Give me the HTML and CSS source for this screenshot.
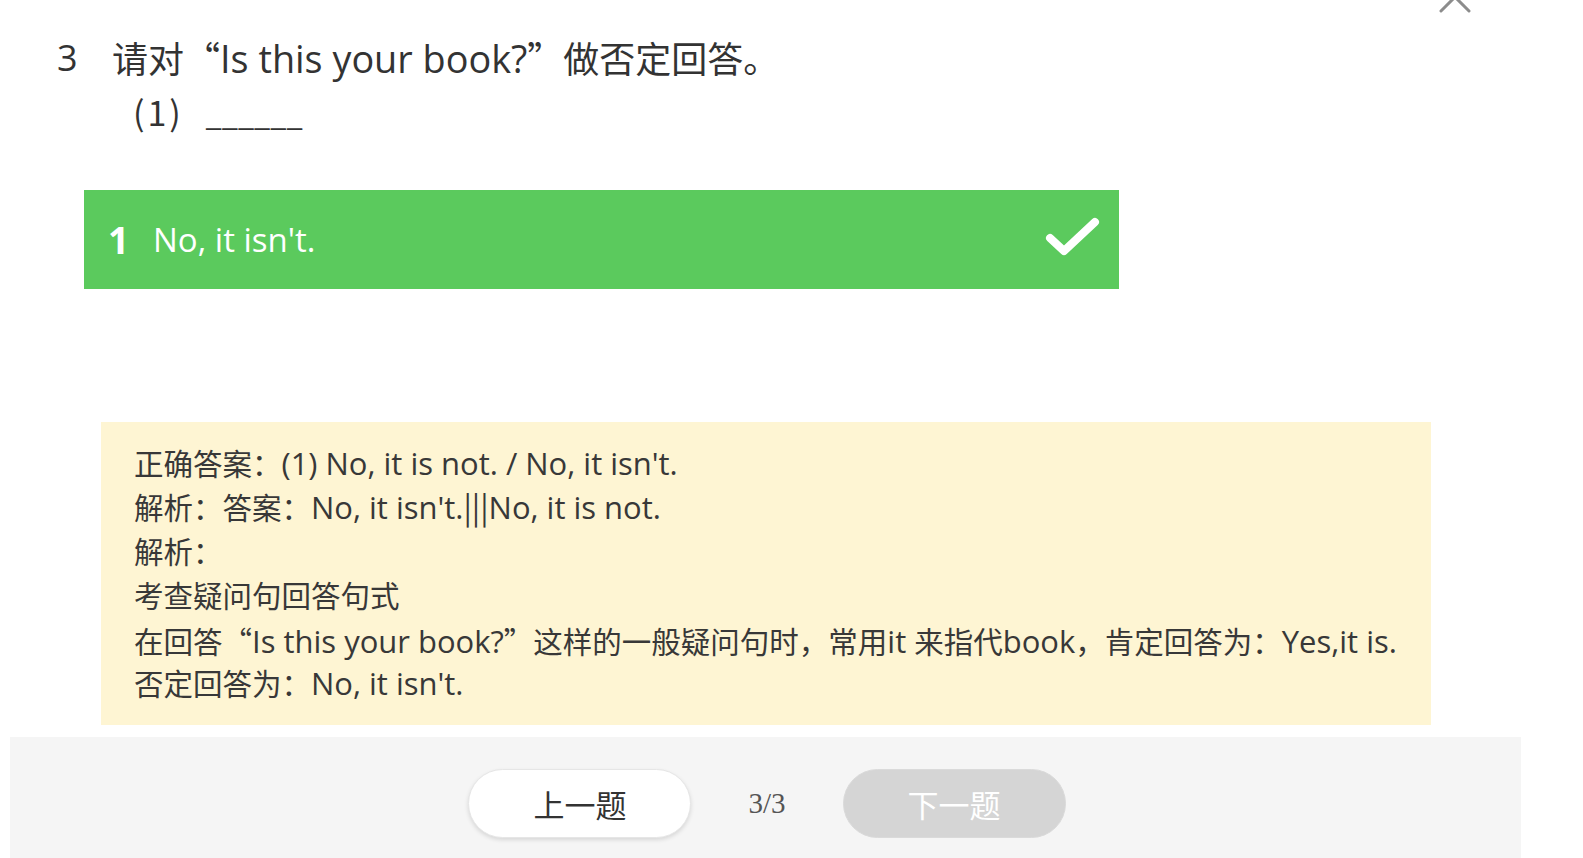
FILE: index.html
```html
<!DOCTYPE html>
<html lang="zh-CN">
<head>
<meta charset="utf-8">
<title>题目解析</title>
<link rel="stylesheet" href="styles.css">
</head>
<body>
<div class="page">
  <svg class="close" width="40" height="20" viewBox="0 0 40 20" aria-hidden="true">
    <path d="M6 11 L34 -17 M34 11 L6 -17" stroke="#8c8c8c" stroke-width="3" stroke-linecap="round" fill="none"/>
  </svg>

  <div class="question">
    <div class="q-title"><span class="q-no">3</span><span class="q-text">请对<span class="cjk">“</span><span class="en">Is this your book?</span><span class="cjk">”</span>做否定回答。</span></div>
    <div class="q-blank"><span class="q-paren">(1)</span> <span class="q-line">______</span></div>
  </div>

  <div class="answer">
    <span class="a-no">1</span>
    <span class="a-text">No, it isn't.</span>
    <svg class="a-check" width="56" height="40" viewBox="0 0 56 40" aria-hidden="true">
      <path d="M5 21 L19 34 L50 5" stroke="#ffffff" stroke-width="8" stroke-linecap="round" stroke-linejoin="round" fill="none"/>
    </svg>
  </div>

  <div class="analysis">
    <p>正确答案：<span class="en">(1) No, it is not. / No, it isn't.</span></p>
    <p>解析：答案：<span class="en">No, it isn't.<span class="cjk">|||</span>No, it is not.</span></p>
    <p>解析：</p>
    <p>考查疑问句回答句式</p>
    <p>在回答<span class="cjk">“</span><span class="en">Is this your book?</span><span class="cjk">”</span>这样的一般疑问句时，常用<span class="en">it </span>来指代<span class="en">book</span>，肯定回答为：<span class="en">Yes,it is.</span></p>
    <p>否定回答为：<span class="en">No, it isn't.</span></p>
  </div>

  <div class="footer">
    <button class="btn btn-prev" type="button">上一题</button>
    <span class="pager">3/3</span>
    <button class="btn btn-next" type="button" disabled>下一题</button>
  </div>
</div>
</body>
</html>
```

FILE: styles.css
```css
html, body {
  margin: 0;
  padding: 0;
  background: #ffffff;
  height: 100%;
  overflow: hidden;
}

body {
  font-family: "Open Sans", "Noto Sans CJK SC", sans-serif;
  color: #333333;
}

.cjk {
  font-family: "Noto Sans CJK SC", sans-serif;
}

.en {
  font-size: 1.05em;
  line-height: 1;
}

.page {
  position: relative;
  width: 1511px;
  margin-left: 10px;
}

.close {
  position: absolute;
  top: 0;
  left: 1425px;
}

.question {
  padding-top: 31px;
  padding-left: 47px;
}

.q-title {
  font-size: 36px;
  height: 54px;
  line-height: 54px;
  display: flex;
  align-items: center;
  white-space: nowrap;
}

.q-title .en {
  font-size: 1.05em;
}

.q-no {
  width: 55px;
  flex: none;
}

.q-blank {
  font-size: 34px;
  height: 54px;
  line-height: 54px;
  padding-left: 76px;
  font-family: "Noto Sans CJK SC", sans-serif;
}

.q-paren {
  letter-spacing: 3px;
}

.q-line {
  font-size: 29px;
  margin-left: 14px;
}

.answer {
  margin-top: 51px;
  margin-left: 74px;
  width: 1035px;
  height: 99px;
  background: #5bca5d;
  color: #ffffff;
  display: flex;
  align-items: center;
  box-sizing: border-box;
  padding-left: 24px;
  padding-right: 18px;
}

.a-no {
  font-size: 37px;
  font-weight: 700;
  width: 45px;
  flex: none;
}

.a-text {
  font-size: 33px;
  flex: 1;
}

.a-check {
  flex: none;
  margin-bottom: 6px;
}

.analysis {
  margin-top: 133px;
  margin-left: 91px;
  width: 1330px;
  box-sizing: border-box;
  padding: 20px 20px 19px 33px;
  background: #fef5d3;
  font-size: 29.5px;
  line-height: 44px;
  color: #383838;
}

.analysis p {
  margin: 0;
  height: 44px;
  white-space: nowrap;
}

.footer {
  margin-top: 12px;
  height: 130px;
  background: #f5f5f5;
  display: flex;
  justify-content: center;
  align-items: flex-start;
  padding-top: 32px;
  padding-left: 3px;
  box-sizing: border-box;
}

.btn {
  width: 223px;
  height: 69px;
  border-radius: 35px;
  font-family: "Noto Sans CJK SC", sans-serif;
  font-size: 31px;
  border: 1px solid #e6e6e6;
  padding: 0;
  flex: none;
}

.btn-prev {
  background: #ffffff;
  color: #333333;
  box-shadow: 0 2px 4px rgba(0, 0, 0, 0.12);
}

.btn-next {
  background: #d5d5d5;
  color: #ffffff;
  border-color: #dadada;
}

.pager {
  font-family: "Liberation Serif", serif;
  font-size: 29px;
  color: #555555;
  line-height: 69px;
  margin: 0 57px 0 57px;
}
```
